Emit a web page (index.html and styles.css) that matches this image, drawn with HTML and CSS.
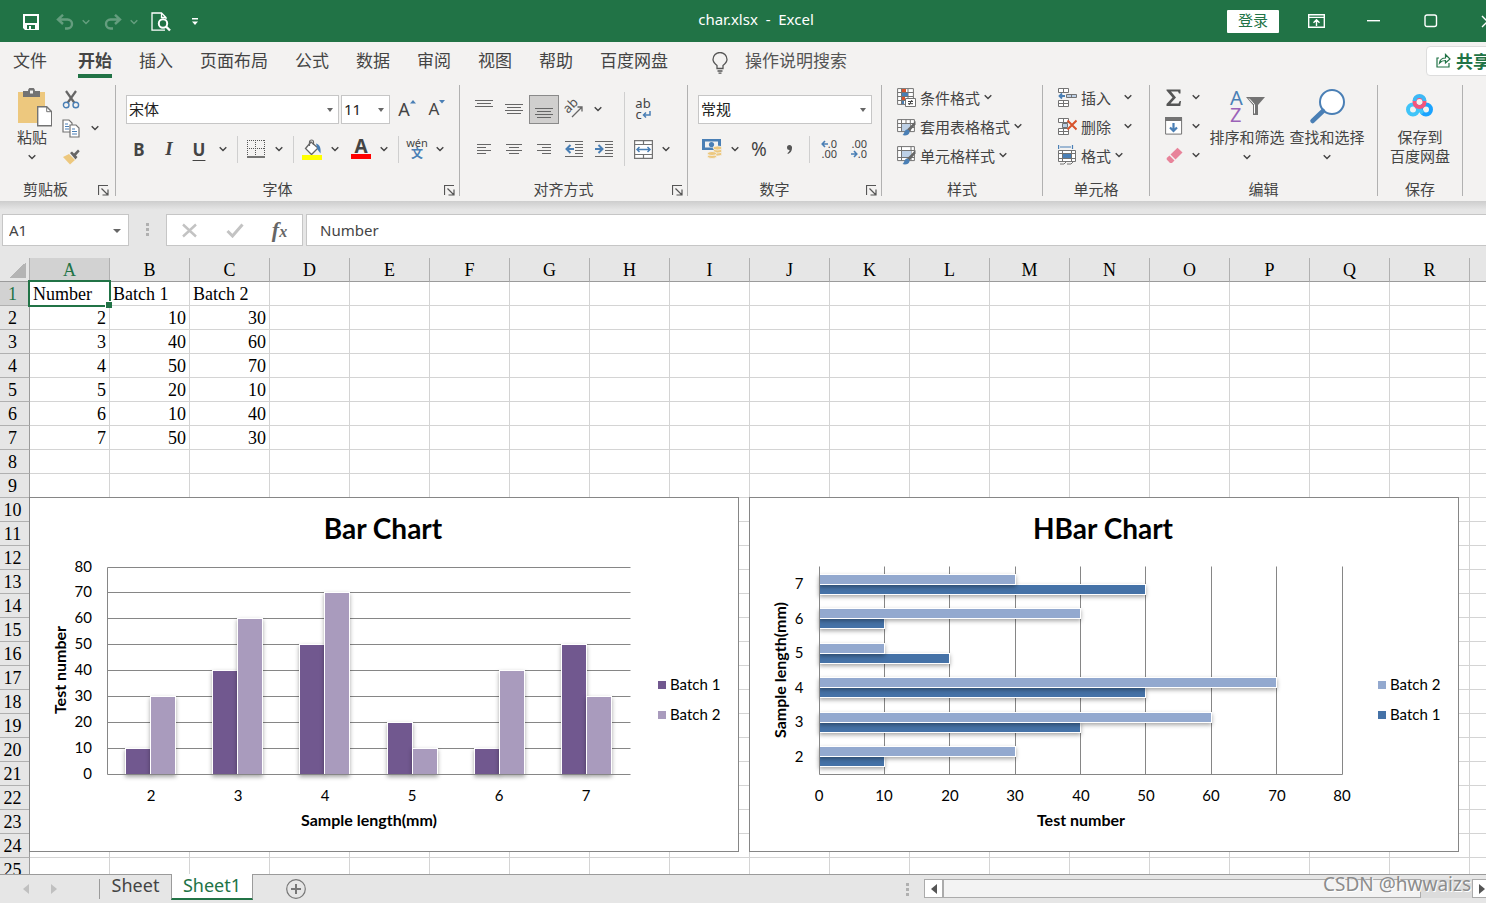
FILE: index.html
```html
<!DOCTYPE html>
<html lang="zh-CN">
<head>
  <meta charset="UTF-8" />
  <title>char.xlsx - Excel</title>
  <meta name="viewport" content="width=device-width, initial-scale=1.0" />
  <link rel="stylesheet" href="styles.css">
</head>
<body>

  <!-- Shared icons -->
  <svg class="sprite" aria-hidden="true">
    <symbol id="chev" viewBox="0 0 8 6"><path d="M.7 1.2 4 4.5 7.3 1.2" fill="none" stroke="currentColor" stroke-width="1.4"/></symbol>
    <symbol id="launch" viewBox="0 0 11 11"><path d="M.5 10V.5H10M3.5 3.5l6 6M10 4.500V10H4.500" fill="none" stroke="#555" stroke-width="1.2"/></symbol>
  </svg>

  <div class="app">

    <!-- Title bar -->
    <header class="titlebar">
      <div class="quick">
        <button class="icon" aria-label="保存">
          <svg width="16" height="16"><path d="M0 0h16v16H2l-2-2zM2 2v7h12V2zM4 11v4h2v-3h2v3h4v-4z" fill="#fff" fill-rule="evenodd"/></svg>
        </button>
        <div class="pair faded">
          <button class="icon" aria-label="撤消">
            <svg width="18" height="16" fill="none" stroke="#fff" stroke-width="2.400"><path d="M7 .8 2 5.500 7 10M2 5.500h9.500a4.500 4.500 0 0 1 0 9H9"/></svg>
          </button>
          <button class="chev" aria-label="撤消列表"><svg><use href="#chev"/></svg></button>
        </div>
        <div class="pair faded">
          <button class="icon" aria-label="恢复">
            <svg width="18" height="16" fill="none" stroke="#fff" stroke-width="2.400"><path d="m11 .8 5 4.700-5 4.500M16 5.500H6.500a4.500 4.500 0 0 0 0 9H9"/></svg>
          </button>
          <button class="chev" aria-label="恢复列表"><svg><use href="#chev"/></svg></button>
        </div>
        <button class="icon" aria-label="打印预览">
          <svg width="20" height="20" fill="none" stroke="#fff" stroke-width="1.300"><path d="M14 18.200H1V1h9.500L15 5.500V7M10.500 1v4.500H15"/><circle cx="12" cy="11.500" r="4.200" stroke-width="2"/><path d="m15 14.500 4 4" stroke-width="2.400"/></svg>
        </button>
        <button class="icon" aria-label="自定义快速访问工具栏">
          <svg width="6" height="8" fill="#fff"><path d="M0 0h6v1.500H0zM0 3.500h6L3 7z"/></svg>
        </button>
      </div>
      <div class="doc-title">char.xlsx&nbsp; -&nbsp; Excel</div>
      <div class="window-tools">
        <button class="login">登录</button>
        <button class="win" aria-label="功能区显示选项">
          <svg width="17" height="14" fill="none" stroke="#fff" stroke-width="1.400"><path d="M.7.700h15.600v12.600H.7zM.7 3.400h15.600M8.500 12V6M5.500 8.700l3-3 3 3"/></svg>
        </button>
        <button class="win" aria-label="最小化"><svg width="13" height="2"><path d="M0 0h13v1.400H0z" fill="#fff"/></svg></button>
        <button class="win" aria-label="最大化"><svg width="14" height="14"><rect x="1" y="1" width="11.500" height="11.500" rx="2" fill="none" stroke="#fff" stroke-width="1.400"/></svg></button>
        <button class="win" aria-label="关闭"><svg width="13" height="13"><path d="m1 1 11 11M12 1 1 12" stroke="#fff" stroke-width="1.400"/></svg></button>
      </div>
    </header>

    <!-- Ribbon tabs -->
    <nav class="tabs">
      <a href="#" class="file">文件</a>
      <a href="#" class="active">开始</a>
      <a href="#">插入</a>
      <a href="#">页面布局</a>
      <a href="#">公式</a>
      <a href="#">数据</a>
      <a href="#">审阅</a>
      <a href="#">视图</a>
      <a href="#">帮助</a>
      <a href="#">百度网盘</a>
      <label class="tell-me">
        <svg width="18" height="22" fill="none" stroke="#555" stroke-width="1.300"><path d="M6 16.500v-3C3.500 11.500 2 9.800 2 7.500a7 7 0 0 1 14 0c0 2.300-1.500 4-4 6v3zM6.500 19h5M7.500 21.200h3"/></svg>
        <input type="text" placeholder="操作说明搜索" aria-label="操作说明搜索">
      </label>
      <button class="share">
        <svg width="15" height="15" fill="none" stroke="#217346" stroke-width="1.200"><path d="M3 5H1v9h12v-4M3.500 10c.5-3.500 2.500-5 6-5V1.500L14 6 9.500 10V7.500c-2.500 0-4.500.7-6 2.500z"/></svg>
        共享
      </button>
    </nav>

    <!-- Ribbon -->
    <div class="ribbon">

      <section class="group clipboard">
        <div class="body">
          <button class="big">
            <svg width="40" height="39" viewBox="-5 0 40 39"><path d="M1 4h27v31H1z" fill="#edc87e"/><path d="M6 3h5a3.500 3.500 0 0 1 7 0h5v6H6z" fill="#737373"/><path d="M13 2.500h3v3h-3z" fill="#f3f2f1"/><path d="M20.700 18.700h9l5 5v14h-14z" fill="#fff" stroke="#737373" stroke-width="1.400"/><path d="M29.700 18.700v5h5" fill="none" stroke="#737373"/></svg>
            <span>粘贴</span>
            <svg class="c"><use href="#chev"/></svg>
          </button>
          <div class="stack">
            <div class="line"><button class="tool" aria-label="剪切">
              <svg width="18" height="19" fill="none"><path d="M4 1l8.500 12M14 1 5.500 13" stroke="#666" stroke-width="2.200"/><circle cx="4.200" cy="15" r="2.800" stroke="#4a7fb5" stroke-width="1.400"/><circle cx="13.800" cy="15" r="2.800" stroke="#4a7fb5" stroke-width="1.400"/></svg>
            </button></div>
            <div class="line"><button class="tool" aria-label="复制">
              <svg width="18" height="19" fill="#fff" stroke="#737373" stroke-width="1.200"><path d="M1 1h6l3 3v9H1z"/><path d="M8 6h6l3 3v9H8z"/><path d="M3 5h3M3 7.500h4M3 10h4M10 10h3M10 12.500h5M10 15h5" stroke="#4a7fb5"/></svg>
            </button><button class="chev" aria-label="复制选项"><svg><use href="#chev"/></svg></button></div>
            <div class="line"><button class="tool" aria-label="格式刷">
              <svg width="18" height="16"><path d="m1 8 6-3 6 6-5 4.500z" fill="#edc87e"/><path d="m8 4 2-1.500 2 2L16 .5 17.700 2.200 14 6.500l1.500 1.500-2 2.500z" fill="#666"/></svg>
            </button></div>
          </div>
        </div>
        <footer><span>剪贴板</span><button aria-label="剪贴板设置"><svg><use href="#launch"/></svg></button></footer>
      </section>

      <section class="group font">
        <div class="body rows">
          <div class="row">
            <div class="combo family"><select aria-label="字体"><option>宋体</option></select></div>
            <div class="combo size"><select aria-label="字号"><option>11</option></select></div>
            <button class="tool resize" aria-label="增大字号">A<svg width="6" height="4"><path d="M0 3.500 3 0l3 3.500z" fill="#4a7fb5"/></svg></button>
            <button class="tool resize small" aria-label="减小字号">A<svg width="6" height="4"><path d="M0 0h6L3 3.500z" fill="#4a7fb5"/></svg></button>
          </div>
          <div class="row second">
            <button class="tool letter bold">B</button>
            <button class="tool letter italic">I</button>
            <button class="tool letter under">U</button>
            <button class="chev" aria-label="下划线选项"><svg><use href="#chev"/></svg></button>
            <i class="sep"></i>
            <div class="split">
              <button class="narrow" aria-label="边框">
                <svg width="18" height="18" fill="none" stroke="#555"><path d="M0 .5h18M0 8.500h18M.5 0v16M8.500 0v16M17.500 0v16" stroke-dasharray="1 1"/><path d="M0 17h18" stroke-width="1.600"/></svg>
              </button><button class="chev" aria-label="边框选项"><svg><use href="#chev"/></svg></button>
            </div>
            <i class="sep"></i>
            <div class="split">
              <button class="narrow" aria-label="填充颜色">
                <svg width="20" height="21"><path d="m9 3 7 6-6.500 6.500L3.500 9.500z" fill="#fff" stroke="#666" stroke-width="1.300"/><path d="M7.500 7V3a2 2 0 0 1 4 0v3" fill="none" stroke="#666" stroke-width="1.200"/><path d="M14 4.500c4 1 5 4.500 4.500 10l-3-4z" fill="#4a7fb5"/><path d="M0 16h20v5H0z" fill="#ff0"/></svg>
              </button><button class="chev" aria-label="填充选项"><svg><use href="#chev"/></svg></button>
            </div>
            <div class="split">
              <button class="narrow font-color" aria-label="字体颜色">A</button><button class="chev" aria-label="字体颜色选项"><svg><use href="#chev"/></svg></button>
            </div>
            <i class="sep"></i>
            <div class="split">
              <button class="narrow pinyin"><span>wén</span><b>文</b></button><button class="chev" aria-label="拼音选项"><svg><use href="#chev"/></svg></button>
            </div>
          </div>
        </div>
        <footer><span>字体</span><button aria-label="字体设置"><svg><use href="#launch"/></svg></button></footer>
      </section>

      <section class="group align">
        <div class="body">
          <div class="rows">
            <div class="row">
              <button class="tool" aria-label="顶端对齐"><svg class="lines" width="18" height="18"><path d="M0 .5h18M2 3.500h14M0 6.500h18"/></svg></button>
              <button class="tool" aria-label="垂直居中"><svg class="lines" width="18" height="18"><path d="M0 4.500h18M2 7.500h14M0 10.500h18M2 13.500h14"/></svg></button>
              <button class="tool pressed" aria-label="底端对齐"><svg class="lines" width="18" height="18"><path d="M0 8.500h18M2 11.500h14M0 14.500h18M2 17.500h14"/></svg></button>
              <button class="tool" aria-label="方向">
                <svg width="20" height="20"><text x="4" y="15" transform="rotate(-45 4 15)" class="ab">ab</text><path d="m8 18 10-10M13.500 8H18v4.500" fill="none" stroke="#666" stroke-width="1.300"/></svg>
              </button>
              <button class="chev" aria-label="方向选项"><svg><use href="#chev"/></svg></button>
            </div>
            <div class="row">
              <button class="tool" aria-label="左对齐"><svg class="lines" width="18" height="14"><path d="M2 2.500h14M2 5.500h9M2 8.500h14M2 11.500h9"/></svg></button>
              <button class="tool" aria-label="居中"><svg class="lines" width="18" height="14"><path d="M1 2.500h16M4 5.500h10M1 8.500h16M4 11.500h10"/></svg></button>
              <button class="tool" aria-label="右对齐"><svg class="lines" width="18" height="14"><path d="M2 2.500h14M7 5.500h9M2 8.500h14M7 11.500h9"/></svg></button>
              <button class="tool" aria-label="减少缩进"><svg class="lines" width="18" height="18"><path d="M0 1.500h18M10 4.500h8M10 7.500h8M10 10.500h8M10 13.500h8M0 16.500h18"/><path class="arrow" d="M9 9H2M5.500 5 1.500 9l4 4"/></svg></button>
              <button class="tool" aria-label="增加缩进"><svg class="lines" width="18" height="18"><path d="M0 1.500h18M10 4.500h8M10 7.500h8M10 10.500h8M10 13.500h8M0 16.500h18"/><path class="arrow" d="M0 9h7M3.500 5l4 4-4 4"/></svg></button>
            </div>
          </div>
          <i class="sep tall"></i>
          <div class="rows">
            <div class="row">
              <button class="narrow wrap" aria-label="自动换行"><span>ab</span><span>c<svg width="9" height="8" fill="none" stroke="#4a7fb5" stroke-width="1.500"><path d="M8 0v4H1.500M4 1.500 1.500 4 4 6.500"/></svg></span></button>
            </div>
            <div class="row">
              <button class="narrow" aria-label="合并后居中">
                <svg width="19" height="19" fill="#fff" stroke="#737373" stroke-width="1.200"><path d="M.6.600h17.800v17.800H.6zM.6 4.500h17.800M.6 14.500h17.800M9.500.600v4M9.500 14.500v4"/><path d="M3 9.500h13M5.500 7 3 9.500 5.500 12M13.500 7 16 9.500 13.500 12" fill="none" stroke="#4a7fb5" stroke-width="1.500"/></svg>
              </button><button class="chev" aria-label="合并选项"><svg><use href="#chev"/></svg></button>
            </div>
          </div>
        </div>
        <footer><span>对齐方式</span><button aria-label="对齐设置"><svg><use href="#launch"/></svg></button></footer>
      </section>

      <section class="group number">
        <div class="body rows">
          <div class="row">
            <div class="combo format"><select aria-label="数字格式"><option>常规</option></select></div>
          </div>
          <div class="row">
            <button class="narrow" aria-label="会计数字格式">
              <svg width="20" height="20"><path d="M0 0h19v11H0z" fill="#4a7fb5"/><path d="M3 2.500h13v6H3z" fill="#f3f2f1"/><circle cx="9.500" cy="5.500" r="2.600" fill="#4a7fb5"/><g fill="#edc87e" stroke="#f3f2f1" stroke-width=".8"><ellipse cx="15.500" cy="15" rx="4.500" ry="2"/><ellipse cx="15.500" cy="12" rx="4.500" ry="2"/><ellipse cx="15.500" cy="9" rx="4.500" ry="2"/><ellipse cx="10" cy="17.500" rx="4.500" ry="2"/><ellipse cx="10" cy="14.500" rx="4.500" ry="2"/></g></svg>
            </button><button class="chev" aria-label="货币选项"><svg><use href="#chev"/></svg></button>
            <button class="tool percent">%</button>
            <button class="tool" aria-label="千位分隔样式"><svg width="7" height="11"><path d="M3.500 1a2.500 2.500 0 0 1 2.500 3c0 3-1.500 5-4 6l-.6-.8C3 8 3.600 7 3.500 6A2.500 2.500 0 0 1 3.500 1z" fill="#555"/></svg></button>
            <i class="sep"></i>
            <button class="tool decimals" aria-label="增加小数位数"><span><svg width="7" height="8"><path d="M7 4H1.500M4 1 1.200 4 4 7" fill="none" stroke="#4a7fb5" stroke-width="1.600"/></svg>.0</span><span>.00</span></button>
            <button class="tool decimals" aria-label="减少小数位数"><span>.00</span><span><svg width="7" height="8"><path d="M0 4h5.500M3 1l2.800 3L3 7" fill="none" stroke="#4a7fb5" stroke-width="1.600"/></svg>.0</span></button>
          </div>
        </div>
        <footer><span>数字</span><button aria-label="数字设置"><svg><use href="#launch"/></svg></button></footer>
      </section>

      <section class="group styles">
        <div class="body list">
          <button>
            <svg width="19" height="19"><path d="M.6.600h15.800v15.800H.6zM.6 4.500h15.800M.6 8.500h15.800M.6 12.500h15.800M4.500.600v15.800M11 .6v15.800" fill="#fff" stroke="#737373"/><path d="M5 1h4v3H5zM5 9h3v3H5z" fill="#d8532c"/><path d="M5 5h6v3H5zM5 13h2v3H5z" fill="#4a7fb5"/><path d="M8.500 10.500h10v8h-10z" fill="#fff" stroke="#737373"/><path d="M11 13.500h5M11 15.700h5M15 12l-3 5" stroke="#444"/></svg>
            条件格式<svg class="c"><use href="#chev"/></svg>
          </button>
          <button>
            <svg width="19" height="19"><path d="M.6 2.600h16.800v12H.6zM.6 6.500h16.800M.6 10.500h16.800M4.500 2.600v12M9 2.600v12M13.300 2.600v12" fill="#fff" stroke="#737373"/><path d="M5 7h8v7H5z" fill="#bdd0e6"/><path d="M18.500 4v3.500l-6 7-2.500-2z" fill="#666"/><path d="M9.500 12.500c2 0 3.500 1 3 3-.5 2.500-4 3.500-7 2.500 2-1 1.500-4.500 4-5.500z" fill="#4a7fb5"/></svg>
            套用表格格式<svg class="c"><use href="#chev"/></svg>
          </button>
          <button>
            <svg width="19" height="19"><path d="M.6.600h16.800v14H.6zM.6 4.500h16.800M4.500.600v14M.6 11.500h16.800M14 .6v14" fill="#fff" stroke="#737373"/><path d="M5 5h9v6H5z" fill="#bdd0e6"/><path d="M18.500 4v3.500l-6 7-2.500-2z" fill="#666"/><path d="M9.500 12.500c2 0 3.500 1 3 3-.5 2.500-4 3.500-7 2.500 2-1 1.500-4.500 4-5.500z" fill="#4a7fb5"/></svg>
            单元格样式<svg class="c"><use href="#chev"/></svg>
          </button>
        </div>
        <footer><span>样式</span></footer>
      </section>

      <section class="group cells">
        <div class="body list">
          <button class="wide">
            <svg width="19" height="19" fill="#fff" stroke="#737373"><path d="M.5.500h10v4H.5zM5.500.500v4M.5 12.500h10v6H.5zM5.500 12.500v6M.5 15.500h10"/><path d="M8.500 6.500h10v3h-10zM13.500 6.500v3" fill="#bdd0e6"/><path d="M7 8H1.500M4 5.500 1.500 8 4 10.500" fill="none" stroke="#4a7fb5" stroke-width="1.800"/></svg>
            插入<svg class="c"><use href="#chev"/></svg>
          </button>
          <button class="wide">
            <svg width="19" height="19" fill="#fff" stroke="#737373"><path d="M.5 1.500h10v4H.5zM5.500 1.500v4M.5 11.500h10v6H.5zM5.500 11.500v6M.5 14.500h10"/><path d="M4.500 6.500h5v4h-5z" fill="#bdd0e6"/><path d="m9.500 3.500 9 9M18.500 3.500l-9 9" stroke="#d8532c" stroke-width="2"/></svg>
            删除<svg class="c"><use href="#chev"/></svg>
          </button>
          <button>
            <svg width="19" height="20" fill="#fff" stroke="#737373"><path d="M.5 5.500h17v11H.5zM4.500 5.500v11M13.500 5.500v11M.5 8.500h17M.5 13.500h17M2 19h4l2-2M9 19h4l2-2"/><path d="M5 9h8v4H5z" fill="#4a7fb5" stroke="none"/><path d="M.6 0v4M14.500 0v4M2 2h11" stroke="#4a7fb5" stroke-width="1.200"/></svg>
            格式<svg class="c"><use href="#chev"/></svg>
          </button>
        </div>
        <footer><span>单元格</span></footer>
      </section>

      <section class="group editing">
        <div class="body">
          <div class="stack">
            <div class="line"><button class="tool" aria-label="自动求和"><svg width="16" height="17"><path d="M.5.500h14v4H13l-1-2H5l5 6-5.500 6H12.500l1.200-2.500H15l-.7 5H.5V15l6-6.500L.5 1.500z" fill="#555"/></svg></button><button class="chev" aria-label="求和选项"><svg><use href="#chev"/></svg></button></div>
            <div class="line"><button class="tool" aria-label="填充"><svg width="18" height="18"><path d="M.6.600h16v16.500H.6z" fill="#fff" stroke="#737373"/><path d="M0 0h17v4H0z" fill="#737373"/><path d="M8.500 6v8M5 10.500l3.500 3.500 3.500-3.500" fill="none" stroke="#4a7fb5" stroke-width="2.200"/></svg></button><button class="chev" aria-label="填充选项"><svg><use href="#chev"/></svg></button></div>
            <div class="line"><button class="tool" aria-label="清除"><svg width="17" height="17"><path d="M11.500.700 16.500 5.500 9.500 12.500l-5-5z" fill="#e8839a"/><path d="m3.500 8.500 5 5-2.500 2.500H4L.7 12.500V11z" fill="#e8839a"/></svg></button><button class="chev" aria-label="清除选项"><svg><use href="#chev"/></svg></button></div>
          </div>
          <button class="big">
            <svg width="36" height="39"><text x="1" y="17" class="sort-a">A</text><text x="1" y="34" class="sort-z">Z</text><path d="M17 9h19l-7 8v10h-5V17z" fill="#737373"/><path d="m20 10.500 5.500 6V25.500" stroke="#fff" fill="none"/></svg>
            <span>排序和筛选</span>
            <svg class="c"><use href="#chev"/></svg>
          </button>
          <button class="big">
            <svg width="36" height="39" fill="none" stroke="#4a7fb5"><circle cx="23" cy="14" r="12" stroke-width="2" fill="#fff"/><path d="M14 23 3.500 33" stroke-width="4.500" stroke-linecap="round"/></svg>
            <span>查找和选择</span>
            <svg class="c"><use href="#chev"/></svg>
          </button>
        </div>
        <footer><span>编辑</span></footer>
      </section>

      <section class="group saving">
        <div class="body">
          <button class="big">
            <svg width="28" height="39" fill="none" stroke-width="4"><circle cx="7" cy="21.500" r="5" stroke="#3fc4f8"/><circle cx="20" cy="21.500" r="5" stroke="#1aa3ff"/><path d="m10 18 7 7" stroke="#3fc4f8"/><circle cx="13.500" cy="14" r="5" stroke="#f4547c"/><path d="M8.500 13a5 5 0 0 1 10 0" stroke="#3db8f5"/></svg>
            <span>保存到<br>百度网盘</span>
          </button>
        </div>
        <footer><span>保存</span></footer>
      </section>
    </div>

    <!-- Formula bar -->
    <div class="formula-bar">
      <div class="combo name-box"><input type="text" value="A1" aria-label="名称框"></div>
      <i class="dots"></i>
      <div class="fx-box">
        <button aria-label="取消"><svg width="17" height="15"><path d="m2 1.500 13 12M15 1.500l-13 12" stroke="#c3c3c3" stroke-width="2.400"/></svg></button>
        <button aria-label="输入"><svg width="18" height="15"><path d="m1.500 8 5 5L16.500 1.500" stroke="#c3c3c3" stroke-width="3" fill="none"/></svg></button>
        <button class="fx" aria-label="插入函数">f<sub>x</sub></button>
      </div>
      <input class="formula" type="text" value="Number" aria-label="编辑栏">
    </div>

    <!-- Worksheet -->
    <main class="sheet">
      <table id="grid"></table>
      <div class="selection"></div>
      <svg class="chart chart-bar" id="bar-chart" width="710" height="355"></svg>
      <svg class="chart chart-hbar" id="hbar-chart" width="710" height="355"></svg>
    </main>

    <!-- Sheet tabs -->
    <footer class="statusbar">
      <div class="sheet-nav">
        <button aria-label="上一张"><svg width="6" height="10"><path d="M6 0v10L0 5z" fill="#c0c0c0"/></svg></button>
        <button aria-label="下一张"><svg width="6" height="10"><path d="M0 0v10l6-5z" fill="#c0c0c0"/></svg></button>
      </div>
      <button class="sheet-tab">Sheet</button>
      <button class="sheet-tab current">Sheet1</button>
      <button class="add-sheet" aria-label="新工作表"><svg width="20" height="20" fill="none" stroke="#777"><circle cx="10" cy="10" r="9.300" stroke-width="1.200"/><path d="M10 5v10M5 10h10" stroke-width="2"/></svg></button>
      <i class="dots"></i>
      <div class="scrollbar">
        <button aria-label="向左滚动"><svg width="6" height="10"><path d="M6 0v10L0 5z" fill="#555"/></svg></button>
        <div class="thumb"></div>
        <button class="right" aria-label="向右滚动"><svg width="6" height="10"><path d="M0 0v10l6-5z" fill="#555"/></svg></button>
      </div>
      <div class="watermark">CSDN @hwwaizs</div>
    </footer>
  </div>

  <script src="sheet.js"></script>
</body>
</html>
```
FILE: styles.css
```css
* {
  box-sizing: border-box;
}

body {
  margin: 0;
  overflow: hidden;
  font-family: "Noto Sans", "Noto Sans CJK SC", sans-serif;
  font-size: 15px;
  color: #444;
}

button, input, select {
  margin: 0;
  padding: 0;
  border: 0;
  background: none;
  font: inherit;
  color: inherit;
}

button {
  display: flex;
  align-items: center;
  justify-content: center;
}

svg {
  display: block;
  flex: none;
}

.sprite {
  position: absolute;
  width: 0;
  height: 0;
}

.app {
  display: flex;
  flex-direction: column;
  height: 100vh;
  background: #e6e6e6;
}

/* Title bar and tabs run a little past the right edge of the window */
.titlebar, .tabs {
  width: calc(100% + 30px);
  flex: none;
}

.titlebar {
  display: grid;
  grid-template-columns: 1fr auto 1fr;
  align-items: center;
  height: 42px;
  background: #217346;
  color: #fff;
}

.quick {
  display: flex;
  gap: 6px;
  padding: 2px 0 0 17px;
}

.quick .icon {
  width: 28px;
  height: 28px;
}

.quick .chev {
  width: 14px;
}

.pair, .split, .line {
  display: flex;
}

.faded {
  opacity: 0.3;
}

.doc-title {
  padding: 0 4px 4px 0;
}

.window-tools {
  display: flex;
  align-items: center;
  justify-content: flex-end;
}

.login {
  width: 52px;
  height: 23px;
  margin-right: 9px;
  padding-bottom: 3px;
  background: #fff;
  color: #217346;
  border-radius: 1px;
}

.win {
  width: 57px;
  height: 42px;
}

.tabs {
  display: flex;
  align-items: flex-start;
  gap: 27px;
  height: 42px;
  padding: 3px 0 0 13px;
  background: #f3f2f1;
  font-size: 17px;
}

.tabs a {
  height: 33px;
  line-height: 31px;
  color: #444;
  text-decoration: none;
  white-space: nowrap;
}

.tabs .file {
  margin-right: 4px;
}

.tabs .active {
  font-weight: bold;
  border-bottom: 4px solid #217346;
}

.tell-me {
  display: flex;
  align-items: center;
  gap: 16px;
  margin-left: 16px;
}

.tell-me svg {
  margin-top: 4px;
}

.tell-me input {
  width: 180px;
  height: 31px;
  outline: none;
}

.tell-me input::placeholder {
  color: #555;
}

.share {
  width: 90px;
  height: 30px;
  margin: 1px 0 0 auto;
  justify-content: flex-start;
  gap: 5px;
  padding: 0 0 2px 9px;
  background: #fff;
  border: 1px solid #ddd;
  border-radius: 4px;
  color: #217346;
  font-weight: bold;
}

/* Ribbon */
.ribbon {
  display: flex;
  flex: none;
  height: 117px;
  padding-top: 1px;
  background: #f3f2f1;
}

.group {
  display: flex;
  flex-direction: column;
  flex: none;
  height: 111px;
  border-right: 1px solid #b1b1b1;
}

.clipboard { width: 116px; }
.font { width: 344px; }
.align { width: 228px; }
.number { width: 194px; }
.styles { width: 161px; }
.cells { width: 107px; }
.editing { width: 228px; }
.saving { width: 85px; }

.group .body {
  display: flex;
  flex: 1;
}

.group footer {
  display: flex;
  height: 14px;
  line-height: 14px;
}

.group footer span {
  flex: 1;
  text-align: center;
}

.group footer button {
  width: 20px;
  padding-top: 3px;
}

.clipboard footer button {
  width: 24px;
}

.group footer svg {
  width: 11px;
  height: 11px;
}

.chev svg, .c {
  width: 8px;
  height: 6px;
}

.tool {
  width: 30px;
  height: 28px;
}

.narrow {
  width: 28px;
  height: 28px;
}

.ribbon .chev {
  width: 18px;
  height: 28px;
}

.big {
  flex-direction: column;
  justify-content: flex-start;
  padding-top: 3px;
  line-height: 19px;
  white-space: nowrap;
}

.big span {
  margin-top: 1px;
}

.big .c {
  margin-top: 7px;
}

.stack .line {
  height: 29px;
}

.clipboard .body {
  padding-left: 12px;
}

.clipboard .stack {
  margin-left: 4px;
}

.group .rows {
  display: flex;
  flex-direction: column;
  gap: 10px;
  padding-top: 9px;
}

.row {
  display: flex;
  align-items: center;
  height: 30px;
}

.font .rows {
  padding-left: 10px;
}

.font .second {
  margin-left: -2px;
}

.combo {
  position: relative;
  height: 29px;
  background: #fff;
  border: 1px solid #c6c6c6;
}

.combo::after {
  content: "";
  position: absolute;
  right: 5px;
  top: 12px;
  border: 3px solid transparent;
  border-top: 4px solid #666;
  border-bottom: 0;
  pointer-events: none;
}

.combo select, .combo input {
  width: 100%;
  height: 100%;
  padding-left: 2px;
  appearance: none;
  color: #222;
}

.family { width: 213px; }
.size { width: 49px; margin-left: 2px; }
.format { width: 174px; }

.resize {
  align-items: flex-start;
  padding-top: 2px;
  margin-left: 2px;
  font-size: 18px;
  line-height: 24px;
}

.resize svg {
  margin-top: 3px;
}

.resize.small {
  margin-left: 0;
  font-size: 17px;
}

.letter {
  font-size: 17px;
  font-weight: bold;
}

.italic {
  font-family: "Liberation Serif", serif;
  font-style: italic;
  font-size: 19px;
}

.under {
  text-decoration: underline;
  text-underline-offset: 4px;
  text-decoration-thickness: 1px;
}

.sep {
  width: 10px;
  height: 27px;
  background: linear-gradient(#cfcfcf, #cfcfcf) center / 1px 100% no-repeat;
}

.sep.tall {
  height: 74px;
  margin-top: 7px;
}

.split + .split {
  margin-left: 3px;
}

.font-color {
  font-size: 19px;
  font-weight: bold;
  line-height: 18px;
  background: linear-gradient(#f00, #f00) center bottom 4px / 20px 5px no-repeat;
  padding-bottom: 7px;
}

.pinyin {
  flex-direction: column;
  font-size: 11px;
  line-height: 10px;
}

.pinyin b {
  color: #4a7fb5;
  font-size: 12px;
  line-height: 12px;
}

.align .body {
  padding-left: 9px;
}

.lines {
  fill: none;
  stroke: #666;
  stroke-width: 1;
}

.lines .arrow {
  stroke: #4a7fb5;
  stroke-width: 2;
}

.pressed {
  height: 29px;
  background: #d0cfce;
  border: 1px solid #8a8a8a;
}

.ab {
  font-size: 13px;
  fill: #555;
}

.wrap {
  flex-direction: column;
  font-size: 13px;
  line-height: 11px;
}

.wrap span, .decimals span {
  display: flex;
  align-items: center;
}

.number .body {
  padding-left: 10px;
}

.percent {
  font-size: 19px;
}

.decimals {
  flex-direction: column;
  align-items: flex-end;
  padding-right: 7px;
  font-size: 11px;
  line-height: 10px;
}

.group .list {
  flex-direction: column;
  align-items: flex-start;
  padding-left: 15px;
}

.list button {
  height: 29px;
  gap: 4px;
  padding-bottom: 5px;
  white-space: nowrap;
}

.list .wide .c {
  margin-left: 9px;
}

.editing .body {
  padding-left: 9px;
}

.editing .big {
  width: 80px;
}

.editing .stack {
  width: 48px;
}

.editing .tool, .editing .chev {
  padding-bottom: 4px;
}

.editing .chev {
  width: 14px;
}

.sort-a, .sort-z {
  font-size: 20px;
  fill: #4a7fb5;
}

.sort-z {
  fill: #9b63b8;
}

.saving .big {
  width: 84px;
}

/* Formula bar */
.formula-bar {
  display: flex;
  flex: none;
  height: 57px;
  padding: 13px 0 12px 2px;
  background: linear-gradient(#cdcdcd, #e6e6e6 9px);
}

.name-box {
  width: 127px;
  height: 32px;
}

.name-box::after {
  right: 7px;
  top: 14px;
  border-width: 4px 4px 0;
}

.name-box input {
  padding-left: 6px;
  color: #444;
}

.dots {
  width: 3px;
  margin: 9px 17px 0;
  height: 14px;
  background: repeating-linear-gradient(#b0b0b0 0 3px, transparent 3px 5px);
}

.fx-box {
  display: flex;
  width: 137px;
  height: 32px;
  border: 1px solid #c6c6c6;
  background: #fff;
}

.fx-box button {
  flex: 1;
}

.fx {
  font-family: "Liberation Serif", serif;
  font-style: italic;
  font-weight: bold;
  font-size: 22px;
  color: #666;
}

.fx sub {
  font-size: 16px;
  line-height: 8px;
  margin-top: 4px;
}

.formula {
  flex: 1;
  height: 32px;
  margin-left: 3px;
  margin-right: -2px;
  padding-left: 13px;
  background: #fff;
  border: 1px solid #c6c6c6;
}

/* Worksheet */
.sheet {
  position: relative;
  flex: 1;
  min-height: 0;
  overflow: hidden;
  background: #fff;
}

#grid {
  table-layout: fixed;
  width: 2110px;
  border-collapse: separate;
  border-spacing: 0;
  font-family: "Liberation Serif", serif;
  font-size: 18px;
  line-height: 21px;
  color: #000;
}

#grid th, #grid td {
  width: 80px;
  height: 24px;
  padding: 2px 3px 0;
  border-right: 1px solid #d4d4d4;
  border-bottom: 1px solid #d4d4d4;
  text-align: left;
  font-weight: normal;
  white-space: nowrap;
}

#grid th {
  padding: 2px 0 0;
  background: #e6e6e6;
  border-color: #b0b0b0;
  text-align: center;
}

#grid thead th {
  border-bottom-color: #9b9b9b;
}

#grid th:first-child {
  width: 30px;
  padding-right: 4px;
  border-right-color: #9b9b9b;
}

#grid thead th:first-child {
  border-right-color: #b0b0b0;
  background: linear-gradient(135deg, transparent 50%, #b4b4b4 50%) 10px 4px / 16px 16px no-repeat #e6e6e6;
}

#grid th.on {
  background: #d2d2d2;
  color: #217346;
}

#grid td.num {
  text-align: right;
}

.selection {
  position: absolute;
  left: 28px;
  top: 22px;
  width: 83px;
  height: 27px;
  border: 2px solid #217346;
}

.selection::after {
  content: "";
  position: absolute;
  right: -3px;
  bottom: -3px;
  width: 6px;
  height: 6px;
  background: #217346;
  border: 1px solid #fff;
  border-width: 1px 0 0 1px;
}

.chart {
  position: absolute;
  top: 239px;
  background: #fff;
  border: 1px solid #868686;
  font-family: Lato, sans-serif;
  font-size: 15px;
  fill: #000;
}

.chart-bar { left: 29px; }
.chart-hbar { left: 749px; }

.chart text {
  text-anchor: middle;
}

.chart .title {
  font-size: 28px;
  font-weight: bold;
}

.chart .axis-title {
  font-size: 16px;
  font-weight: bold;
}

.chart .value {
  text-anchor: end;
}

.chart .legend {
  text-anchor: start;
}

.chart line {
  stroke: #868686;
}

.chart .bar {
  stroke: #fff;
  filter: drop-shadow(0 2px 2px rgba(0, 0, 0, 0.35));
}

/* Sheet tabs */
.statusbar {
  position: relative;
  display: flex;
  flex: none;
  height: 29px;
  border-top: 1px solid #9b9b9b;
  font-size: 18px;
}

.sheet-nav {
  display: flex;
  width: 100px;
  height: 20px;
  margin-top: 4px;
  padding-left: 12px;
  border-right: 1px solid #9b9b9b;
}

.sheet-nav button {
  width: 28px;
}

.sheet-tab {
  width: 71px;
  height: 25px;
  margin-top: -1px;
  padding-bottom: 3px;
}

.sheet-tab.current {
  width: 82px;
  height: 26px;
  background: #fff;
  border: 1px solid #9b9b9b;
  border-top: 0;
  border-bottom: 2px solid #217346;
  padding-bottom: 3px;
  color: #217346;
}

.add-sheet {
  width: 20px;
  margin-left: 33px;
}

.statusbar .dots {
  margin: 8px 15px 0 auto;
}

.scrollbar {
  display: flex;
  width: 567px;
  height: 19px;
  margin: 4px -5px 0 0;
  background: #dcdcdc;
}

.scrollbar button {
  width: 19px;
  background: #fff;
  border: 1px solid #ababab;
}

.thumb {
  width: 478px;
  background: #f3f3f3;
  border: 1px solid #ababab;
}

.scrollbar .right {
  margin-left: auto;
}

.watermark {
  position: absolute;
  right: 15px;
  top: -4px;
  font-size: 19px;
  line-height: 26px;
  color: #8c8c8c;
  text-shadow: 1px 1px 0 #fff;
}
```
FILE: sheet.js
```js
const data = [
  ['Number', 'Batch 1', 'Batch 2'],
  [2, 10, 30],
  [3, 40, 60],
  [4, 50, 70],
  [5, 20, 10],
  [6, 10, 40],
  [7, 50, 30]
];
const letters = 'ABCDEFGHIJKLMNOPQRSTUVWXYZ'.split('');

// Grid
let html = '<thead><tr><th></th>';
letters.forEach((l, i) => {
  html += `<th${i === 0 ? ' class="on"' : ''}>${l}</th>`;
});
html += '</tr></thead><tbody>';
for (let r = 0; r < 50; r++) {
  html += `<tr><th${r === 0 ? ' class="on"' : ''}>${r + 1}</th>`;
  letters.forEach((l, c) => {
    const v = data[r] && data[r][c] !== undefined ? data[r][c] : '';
    html += `<td${typeof v === 'number' ? ' class="num"' : ''}>${v}</td>`;
  });
  html += '</tr>';
}
document.getElementById('grid').innerHTML = html + '</tbody>';

// Charts
const rows = data.slice(1);
const max = 80;
const plotW = 523;
const plotH = 207;
const top0 = 69;

function line(x1, y1, x2, y2) {
  const p = v => Math.floor(v) + 0.5;
  return `<line x1="${p(x1)}" y1="${p(y1)}" x2="${p(x2)}" y2="${p(y2)}"/>`;
}

function bar(x, y, w, h, color) {
  const x0 = Math.floor(x), y0 = Math.floor(y);
  return `<rect class="bar" x="${x0 + 0.5}" y="${y0 + 0.5}" width="${Math.floor(x + w) - x0}" height="${Math.floor(y + h) - y0}" fill="${color}"/>`;
}

function text(x, y, str, cls) {
  return `<text x="${x}" y="${y}" class="${cls || ''}">${str}</text>`;
}

function legend(x, items) {
  return items.map((it, i) =>
    `<rect x="${x}" y="${183 + i * 30}" width="8" height="8" fill="${it[1]}"/>` +
    text(x + 12, 192 + i * 30, it[0], 'legend')).join('');
}

function drawBar() {
  const left = 77;
  const step = plotW / rows.length;
  const w = 25;
  let s = text(353, 41, 'Bar Chart', 'title');
  for (let v = 0; v <= max; v += 10) {
    const y = top0 + plotH - v / max * plotH;
    if (v) s += line(left, y, left + plotW, y);
    s += text(62, Math.floor(y) + 5, v, 'value');
  }
  rows.forEach((r, i) => {
    const cx = left + step * (i + 0.5);
    const h1 = r[1] / max * plotH, h2 = r[2] / max * plotH;
    s += bar(cx - w, top0 + plotH - h1, w, h1, '#71588f');
    s += bar(cx, top0 + plotH - h2, w, h2, '#a99bbd');
    s += text(Math.round(cx), 303, r[0]);
  });
  s += line(left, top0 + plotH, left + plotW, top0 + plotH);
  s += line(left, top0, left, top0 + plotH);
  s += text(339, 328, 'Sample length(mm)', 'axis-title');
  s += '<g transform="translate(36 172) rotate(-90)">' + text(0, 0, 'Test number', 'axis-title') + '</g>';
  s += legend(628, [['Batch 1', '#71588f'], ['Batch 2', '#a99bbd']]);
  document.getElementById('bar-chart').innerHTML = s;
}

function drawHBar() {
  const left = 69;
  const step = plotH / rows.length;
  const h = 10;
  let s = text(353, 41, 'HBar Chart', 'title');
  for (let v = 0; v <= max; v += 10) {
    const x = left + v / max * plotW;
    if (v) s += line(x, top0 - 1, x, top0 + plotH);
    s += text(Math.round(x), 303, v);
  }
  rows.forEach((r, i) => {
    const cy = top0 + plotH - step * (i + 0.5);
    s += bar(left, cy, r[1] / max * plotW, h, '#4572a7');
    s += bar(left, cy - h, r[2] / max * plotW, h, '#93a9cf');
    s += text(49, Math.round(cy) + 5, r[0]);
  });
  s += line(left, top0 - 1, left, top0 + plotH);
  s += line(left, top0 + plotH, left + plotW, top0 + plotH);
  s += text(331, 328, 'Test number', 'axis-title');
  s += '<g transform="translate(36 172) rotate(-90)">' + text(0, 0, 'Sample length(mm)', 'axis-title') + '</g>';
  s += legend(628, [['Batch 2', '#93a9cf'], ['Batch 1', '#4572a7']]);
  document.getElementById('hbar-chart').innerHTML = s;
}

drawBar();
drawHBar();
```
